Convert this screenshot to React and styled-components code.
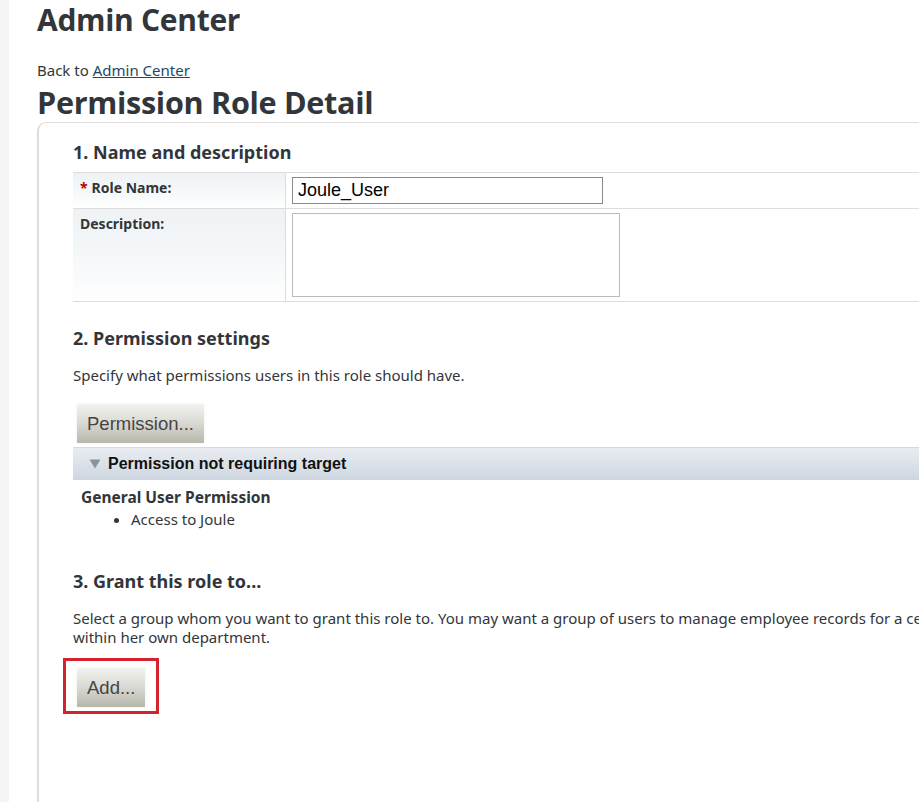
import React from 'react';
import styled, { createGlobalStyle } from 'styled-components';

const GlobalStyle = createGlobalStyle`
  html, body {
    margin: 0;
    padding: 0;
    background: #ffffff;
    overflow: hidden;
  }
  body {
    font-family: 'Noto Sans', 'Open Sans', sans-serif;
    color: #32363a;
  }
`;

const Page = styled.div`
  display: flex;
  height: 802px;
  overflow: hidden;
`;
const SideRail = styled.div`
  flex: 0 0 9px;
  background: #f4f5f6;
`;
const Main = styled.div`
  flex: 0 0 auto;
  width: 1100px;
  padding-left: 28px;
`;
const Title = styled.h1`
  font-family: 'Open Sans', sans-serif;
  font-weight: 700;
  font-size: 30px;
  line-height: 40px;
  margin: 0;
  color: #32363a;
  letter-spacing: -0.3px;
`;
const BackLine = styled.div`
  margin-top: 20px;
  font-size: 15px;
  line-height: 20px;
  color: #32363a;

  a {
    color: #1b4a67;
    text-decoration: underline;
  }
`;
const PageTitle = styled(Title)`
  margin-top: 2px;
  font-size: 30.6px;
`;
const Panel = styled.div`
  border-top: 1px solid #dddddd;
  border-left: 2px solid #dddddd;
  border-top-left-radius: 9px;
  padding: 13px 0 90px 34px;
`;
const SectionHeading = styled.h2`
  font-size: 18px;
  font-weight: 700;
  line-height: 24px;
  margin: 4px 0 8px;
  color: #32363a;
`;
const FormTable = styled.div`
  display: grid;
  grid-template-columns: 213px 1fr;
  border-top: 1px solid #dddddd;
`;
const LabelCell = styled.div`
  padding: 5px 7px;
  height: ${p => p.h}px;
  box-sizing: border-box;
  border-bottom: 1px solid #dddddd;
  border-right: 1px solid #dddddd;
  background: linear-gradient(to bottom, #eef2f5, #f8fafb 70%, #ffffff);
  font-size: 14px;
  font-weight: 700;
  color: #32363a;
`;
const ValueCell = styled.div`
  padding: 4px 6px;
  height: ${p => p.h}px;
  box-sizing: border-box;
  border-bottom: 1px solid #dddddd;
`;
const Required = styled.span`
  color: #b00;
  margin-right: 4px;
`;
const TextInput = styled.input`
  box-sizing: border-box;
  width: 311px;
  height: 27px;
  border: 1px solid #8a8a8a;
  padding: 0 5px;
  font-family: 'Liberation Sans', Arial, sans-serif;
  font-size: 18px;
  color: #000;
`;
const TextArea = styled.textarea`
  box-sizing: border-box;
  display: block;
  width: 328px;
  height: 84px;
  border: 1px solid #bbbbbb;
  resize: none;
`;
const Section = styled.section`
  margin-top: ${p => p.top || 0}px;
`;
const Lead = styled.p`
  margin: 16px 0 0;
  font-size: 15px;
  line-height: 19px;
  color: #32363a;
`;
const GrayButton = styled.button`
  font-family: 'Liberation Sans', Arial, sans-serif;
  font-size: 18.5px;
  color: #454545;
  border: none;
  padding: 0 10px;
  height: 39px;
  background: linear-gradient(to bottom, #f2f2f0 0%, #dcdcd6 45%, #b7b7ab 100%);
  box-shadow: 0 0 4px rgba(0, 0, 0, 0.06);
  cursor: pointer;
`;
const ButtonRow = styled.div`
  margin-top: ${p => p.top || 0}px;
  padding-left: 4px;
`;
const GroupBar = styled.div`
  margin-top: 4px;
  height: 32px;
  display: flex;
  align-items: center;
  gap: 7px;
  padding-left: 16px;
  border-top: 1px solid #d3dae2;
  background: linear-gradient(to bottom, #e9edf2, #cdd6e0);
  font-family: 'Liberation Sans', Arial, sans-serif;
  font-weight: 700;
  font-size: 16px;
  color: #111;
`;
const GroupBody = styled.div`
  padding: 8px 8px 0;
`;
const GroupTitle = styled.div`
  font-size: 15.5px;
  font-weight: 700;
  line-height: 19px;
`;
const Bullets = styled.ul`
  margin: 2px 0 0;
  padding-left: 50px;
  font-size: 15px;
  line-height: 20px;
`;
const Highlight = styled.div`
  display: inline-block;
  margin: 11px 0 0 -10px;
  padding: 7px 11px 4px 11px;
  border: 3px solid #d6222d;
`;

const Caret = () => (
  <svg width="12" height="10" viewBox="0 0 12 10" aria-hidden="true">
    <path d="M0.5 0.5 H11.5 L6 9.5 Z" fill="#8f9397" />
  </svg>
);

const App = () => {
  return (
    <>
      <GlobalStyle />
      <Page>
        <SideRail />
        <Main>
          <Title>Admin Center</Title>
          <BackLine>
            Back to <a href="#admin">Admin Center</a>
          </BackLine>
          <PageTitle>Permission Role Detail</PageTitle>
          <Panel>
            <SectionHeading>1. Name and description</SectionHeading>
            <FormTable>
              <LabelCell h={36}>
                <Required>*</Required>Role Name:
              </LabelCell>
              <ValueCell h={36}>
                <TextInput defaultValue="Joule_User" />
              </ValueCell>
              <LabelCell h={93}>Description:</LabelCell>
              <ValueCell h={93}>
                <TextArea />
              </ValueCell>
            </FormTable>

            <Section top={24}>
              <SectionHeading>2. Permission settings</SectionHeading>
              <Lead>Specify what permissions users in this role should have.</Lead>
              <ButtonRow top={19}>
                <GrayButton>Permission...</GrayButton>
              </ButtonRow>
              <GroupBar>
                <Caret />
                Permission not requiring target
              </GroupBar>
              <GroupBody>
                <GroupTitle>General User Permission</GroupTitle>
                <Bullets>
                  <li>Access to Joule</li>
                </Bullets>
              </GroupBody>
            </Section>

            <Section top={40}>
              <SectionHeading>3. Grant this role to...</SectionHeading>
              <Lead>
                Select a group whom you want to grant this role to. You may want a group of users to
                manage employee records for a certain manager
                <br />
                within her own department.
              </Lead>
              <Highlight>
                <GrayButton>Add...</GrayButton>
              </Highlight>
            </Section>
          </Panel>
        </Main>
      </Page>
    </>
  );
};

export default App;
